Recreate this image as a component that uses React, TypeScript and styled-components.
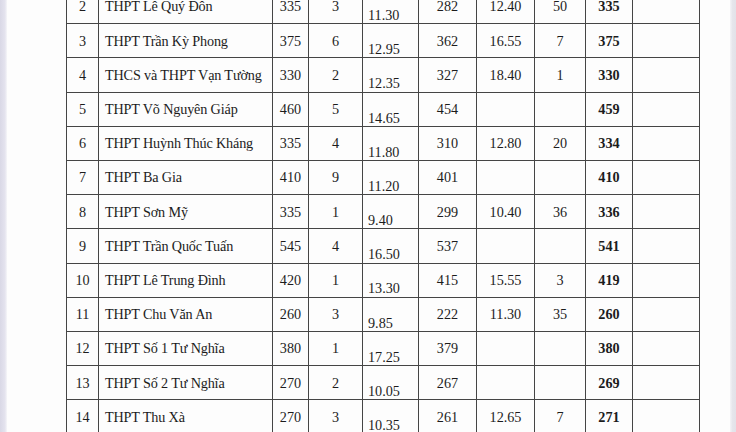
import { createGlobalStyle, styled } from "styled-components"

const GlobalStyle = createGlobalStyle`
  html, body {
    margin: 0;
    padding: 0;
    background: #fdfdfd;
  }
`

const Page = styled.div`
  display: flex;
  width: 736px;
  height: 432px;
  overflow: hidden;
  background: #fdfdfd;
`

const Edge = styled.div<{ $side: "left" | "right" }>`
  flex: 0 0 ${(p) => (p.$side === "left" ? "7px" : "6px")};
  background: ${(p) =>
    p.$side === "left"
      ? "linear-gradient(90deg, #d9d8e6 0%, #e4e3ee 70%, #f6f6f9 100%)"
      : "linear-gradient(90deg, #f4f4f7 0%, #e6e6ec 40%, #e2e2e9 100%)"};
`

const Sheet = styled.div`
  flex: 1;
  padding-left: 59px;
`

const Table = styled.table`
  border-collapse: collapse;
  table-layout: fixed;
  width: 634px;
  margin-top: -11px;
  font-family: "Liberation Serif", "Times New Roman", serif;
  font-size: 14.2px;
  color: #1c1c1c;
`

const Row = styled.tr`
  height: 34.2px;
`

const Cell = styled.td<{ $align?: "left" | "center"; $bold?: boolean; $low?: boolean }>`
  border: 1px solid #454545;
  padding: ${(p) => (p.$low ? "0 0 1px 5px" : p.$align === "left" ? "0 0 0 6px" : "0")};
  text-align: ${(p) => (p.$low ? "left" : p.$align ?? "center")};
  vertical-align: ${(p) => (p.$low ? "bottom" : "middle")};
  font-weight: ${(p) => (p.$bold ? 700 : 400)};
  letter-spacing: ${(p) => (p.$align === "left" ? "-0.15px" : "0")};
  line-height: 1;
  white-space: nowrap;
  overflow: hidden;
`

const widths = [32, 174, 36, 54, 56, 58, 58, 51, 47, 67]

type School = {
  no: number
  name: string
  quota: string
  extra: string
  score: string
  count: string
  score2: string
  count2: string
  total: string
}

const schools: School[] = [
  { no: 2, name: "THPT Lê Quý Đôn", quota: "335", extra: "3", score: "11.30", count: "282", score2: "12.40", count2: "50", total: "335" },
  { no: 3, name: "THPT Trần Kỳ Phong", quota: "375", extra: "6", score: "12.95", count: "362", score2: "16.55", count2: "7", total: "375" },
  { no: 4, name: "THCS và THPT Vạn Tường", quota: "330", extra: "2", score: "12.35", count: "327", score2: "18.40", count2: "1", total: "330" },
  { no: 5, name: "THPT Võ Nguyên Giáp", quota: "460", extra: "5", score: "14.65", count: "454", score2: "", count2: "", total: "459" },
  { no: 6, name: "THPT Huỳnh Thúc Kháng", quota: "335", extra: "4", score: "11.80", count: "310", score2: "12.80", count2: "20", total: "334" },
  { no: 7, name: "THPT Ba Gia", quota: "410", extra: "9", score: "11.20", count: "401", score2: "", count2: "", total: "410" },
  { no: 8, name: "THPT Sơn Mỹ", quota: "335", extra: "1", score: "9.40", count: "299", score2: "10.40", count2: "36", total: "336" },
  { no: 9, name: "THPT Trần Quốc Tuấn", quota: "545", extra: "4", score: "16.50", count: "537", score2: "", count2: "", total: "541" },
  { no: 10, name: "THPT Lê Trung Đình", quota: "420", extra: "1", score: "13.30", count: "415", score2: "15.55", count2: "3", total: "419" },
  { no: 11, name: "THPT Chu Văn An", quota: "260", extra: "3", score: "9.85", count: "222", score2: "11.30", count2: "35", total: "260" },
  { no: 12, name: "THPT Số 1 Tư Nghĩa", quota: "380", extra: "1", score: "17.25", count: "379", score2: "", count2: "", total: "380" },
  { no: 13, name: "THPT Số 2 Tư Nghĩa", quota: "270", extra: "2", score: "10.05", count: "267", score2: "", count2: "", total: "269" },
  { no: 14, name: "THPT Thu Xà", quota: "270", extra: "3", score: "10.35", count: "261", score2: "12.65", count2: "7", total: "271" },
]

export default function App() {
  return (
    <>
      <GlobalStyle />
      <Page>
        <Edge $side="left" />
        <Sheet>
          <Table>
            <colgroup>
              {widths.map((w, i) => (
                <col key={i} style={{ width: w }} />
              ))}
            </colgroup>
            <tbody>
              {schools.map((s) => (
                <Row key={s.no}>
                  <Cell>{s.no}</Cell>
                  <Cell $align="left">{s.name}</Cell>
                  <Cell>{s.quota}</Cell>
                  <Cell>{s.extra}</Cell>
                  <Cell $low>{s.score}</Cell>
                  <Cell>{s.count}</Cell>
                  <Cell>{s.score2}</Cell>
                  <Cell>{s.count2}</Cell>
                  <Cell $bold>{s.total}</Cell>
                  <Cell />
                </Row>
              ))}
            </tbody>
          </Table>
        </Sheet>
        <Edge $side="right" />
      </Page>
    </>
  )
}
